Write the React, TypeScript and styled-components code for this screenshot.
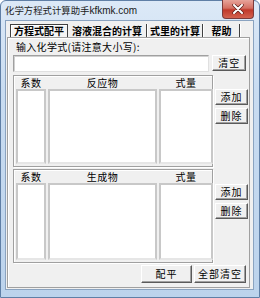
import React from "react";
import styled, { createGlobalStyle } from "styled-components";

const Global = createGlobalStyle`
  html, body { margin: 0; padding: 0; background: #ffffff; }
  body { font-family: "Noto Sans CJK SC", "Liberation Sans", sans-serif; }
  * { box-sizing: border-box; }
`;

const Window = styled.div`
  width: 260px;
  height: 298px;
  display: flex;
  flex-direction: column;
  background: linear-gradient(180deg, #dce9f7 0%, #c9dcf1 30%, #bcd3ec 100%);
  border: 1px solid #5f7fa6;
  border-radius: 6px 6px 0 0;
  padding: 0 5px 7px 4px;
`;

const TitleBar = styled.div`
  height: 23px;
  display: flex;
  align-items: flex-start;
  justify-content: space-between;
`;

const Title = styled.div`
  padding: 2px 0 0 0;
  font-size: 9.4px;
  line-height: 14px;
  color: #1a1a1a;
  white-space: nowrap;
`;

const Latin = styled.span`
  font-family: "Liberation Sans", sans-serif;
  font-size: 10px;
`;

const CloseButton = styled.div`
  width: 32px;
  height: 19px;
  margin-top: -1px;
  border: 1px solid #7b3b3b;
  border-top: none;
  border-radius: 0 0 4px 4px;
  background: linear-gradient(180deg, #e7a49a 0%, #d46f62 45%, #c0392b 55%, #d3624f 100%);
  display: flex;
  align-items: center;
  justify-content: center;
`;

const Client = styled.div`
  flex: 1;
  background: #f0f0f0;
  display: flex;
  flex-direction: column;
  padding: 3px 3px 1px 1px;
  border: 1px solid #8aa3c0;
`;

const TabStrip = styled.div`
  display: flex;
  height: 13px;
  padding-left: 3px;
  align-items: stretch;
`;

const Tab = styled.div<{ $active?: boolean; $w: number }>`
  width: ${(p) => p.$w}px;
  font-size: 10px;
  font-weight: 700;
  line-height: 12px;
  color: #000;
  white-space: nowrap;
  display: flex;
  align-items: center;
  justify-content: center;
  margin-right: ${(p) => (p.$active ? "0" : "1px")};
  border-right: 1px solid #404040;
  border-left: ${(p) => (p.$active ? "1px solid #404040" : "none")};
  border-top: ${(p) => (p.$active ? "1px solid #404040" : "none")};
  background: ${(p) => (p.$active ? "#f4f4f4" : "transparent")};
  box-shadow: ${(p) => (p.$active ? "inset 1px 1px 0 #ffffff" : "1px 0 0 #ffffff")};
`;

const TabPage = styled.div`
  flex: 1;
  border: 1px solid #a0a0a0;
  box-shadow: inset 1px 1px 0 #ffffff;
  display: flex;
  flex-direction: column;
  padding: 2px 3px 4px 5px;
`;

const Label = styled.div`
  font-size: 10px;
  line-height: 13px;
  color: #000;
  padding-left: 3px;
  letter-spacing: 0.3px;
`;

const Row = styled.div`
  display: flex;
  align-items: flex-start;
  gap: 3px;
  margin-top: 2px;
`;

const TextInput = styled.div`
  width: 199px;
  height: 17px;
  background: #fff;
  border: 1px solid #a0a0a0;
  border-right-color: #e0e0e0;
  border-bottom-color: #e0e0e0;
  box-shadow: inset 1px 1px 0 #d0d0d0;
`;

const Btn = styled.div<{ $w?: number; $h?: number }>`
  width: ${(p) => p.$w ?? 33}px;
  height: ${(p) => p.$h ?? 16}px;
  background: #f0f0f0;
  border-top: 1px solid #ffffff;
  border-left: 1px solid #ffffff;
  border-right: 1px solid #5a5a5a;
  border-bottom: 1px solid #5a5a5a;
  box-shadow: inset -1px -1px 0 #a0a0a0;
  font-size: 10px;
  line-height: 12px;
  color: #000;
  display: flex;
  align-items: center;
  justify-content: center;
  letter-spacing: 1px;
  white-space: nowrap;
`;

const GroupRow = styled.div<{ $top: number }>`
  display: flex;
  gap: 2px;
  margin-top: ${(p) => p.$top}px;
`;

const Group = styled.div<{ $h: number }>`
  width: 200px;
  height: ${(p) => p.$h}px;
  border: 1px solid #a0a0a0;
  box-shadow: inset 1px 1px 0 #ffffff, 1px 1px 0 #ffffff;
  display: grid;
  grid-template-columns: 30px 109px 54px;
  grid-template-rows: 13px 1fr;
  column-gap: 2px;
  padding: 0 1px 1px 2px;
`;

const Head = styled.div`
  font-size: 10px;
  line-height: 13px;
  text-align: center;
  color: #000;
  letter-spacing: 0.5px;
`;

const List = styled.div`
  background: #fff;
  border: 2px solid #c8c8c8;
  border-bottom-color: #e6e6e6;
  margin-bottom: 1px;
`;

const BtnCol = styled.div<{ $top: number }>`
  display: flex;
  flex-direction: column;
  gap: 3px;
  padding-top: ${(p) => p.$top}px;
`;

const BottomRow = styled.div`
  display: flex;
  justify-content: flex-end;
  gap: 2px;
  margin-top: 2px;
`;

function ListGroup({ title, h, top, btnTop }: { title: string; h: number; top: number; btnTop: number }) {
  return (
    <GroupRow $top={top}>
      <Group $h={h}>
        <Head>系数</Head>
        <Head>{title}</Head>
        <Head>式量</Head>
        <List />
        <List />
        <List />
      </Group>
      <BtnCol $top={btnTop}>
        <Btn>添加</Btn>
        <Btn>删除</Btn>
      </BtnCol>
    </GroupRow>
  );
}

export default function App() {
  return (
    <>
      <Global />
      <Window>
        <TitleBar>
          <Title>
            化学方程式计算助手<Latin>kfkmk.com</Latin>
          </Title>
          <CloseButton>
            <svg width="12" height="10" viewBox="0 0 12 10">
              <path d="M2 1 L10 9 M10 1 L2 9" stroke="#5a1f1a" strokeWidth="3.4" strokeLinecap="round" />
              <path d="M2 1 L10 9 M10 1 L2 9" stroke="#ffffff" strokeWidth="2" strokeLinecap="round" />
            </svg>
          </CloseButton>
        </TitleBar>
        <Client>
          <TabStrip>
            <Tab $active $w={58}>方程式配平</Tab>
            <Tab $w={79}>溶液混合的计算</Tab>
            <Tab $w={55}>式里的计算</Tab>
            <Tab $w={36}>帮助</Tab>
          </TabStrip>
          <TabPage>
            <Label>输入化学式(请注意大小写):</Label>
            <Row>
              <TextInput />
              <Btn $w={34}>清空</Btn>
            </Row>
            <ListGroup title="反应物" h={92} top={3} btnTop={14} />
            <ListGroup title="生成物" h={94} top={2} btnTop={15} />
            <BottomRow>
              <Btn $w={51} $h={18}>配平</Btn>
              <Btn $w={52} $h={18}>全部清空</Btn>
            </BottomRow>
          </TabPage>
        </Client>
      </Window>
    </>
  );
}
